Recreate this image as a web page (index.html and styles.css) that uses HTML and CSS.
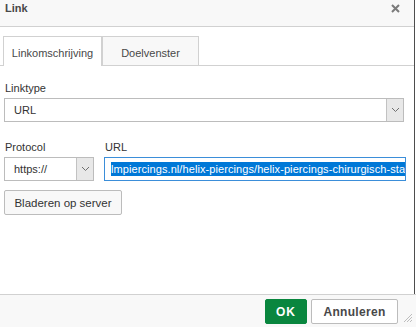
FILE: index.html
```html
<!DOCTYPE html>
<html>
<head>
<meta charset="utf-8">
<link rel="stylesheet" href="styles.css">
</head>
<body>
<div class="dialog">
  <div class="main">
    <div class="title">
      <span class="title-text">Link</span>
      <svg class="close" width="9" height="9" viewBox="0 0 9 9"><path d="M1 1 L8 8 M8 1 L1 8" stroke="#7b7b7b" stroke-width="2" fill="none"/></svg>
    </div>
    <div class="body">
      <div class="tabs">
        <div class="tab tab-active">Linkomschrijving</div>
        <div class="tab tab-second">Doelvenster</div>
      </div>
      <div class="content">
        <div class="label">Linktype</div>
        <div class="select select-wide">
          <span class="select-value">URL</span>
          <span class="drop"><svg width="9" height="6" viewBox="0 0 9 6"><path d="M1 1 L4.5 4.5 L8 1" stroke="#707070" stroke-width="1" fill="none"/></svg></span>
        </div>
        <div class="pair">
          <div class="col">
            <div class="label">Protocol</div>
            <div class="select">
              <span class="select-value">https://</span>
              <span class="drop"><svg width="9" height="6" viewBox="0 0 9 6"><path d="M1 1 L4.5 4.5 L8 1" stroke="#707070" stroke-width="1" fill="none"/></svg></span>
            </div>
          </div>
          <div class="col">
            <div class="label">URL</div>
            <div class="input"><span class="sel">lmpiercings.nl/helix-piercings/helix-piercings-chirurgisch-staal</span></div>
          </div>
        </div>
        <div class="browse">Bladeren op server</div>
      </div>
    </div>
  </div>
  <div class="footer">
    <div class="btn btn-ok">OK</div>
    <div class="btn btn-cancel">Annuleren</div>
    <svg class="grip" width="9" height="9" viewBox="0 0 9 9"><path d="M9 1 L1 9 M9 4 L4 9 M9 7 L7 9" stroke="#bdbdbd" stroke-width="1" fill="none"/></svg>
  </div>
</div>
</body>
</html>
```

FILE: styles.css
```css
html, body {
  margin: 0;
  padding: 0;
  background: #fff;
}
body {
  font-family: "Liberation Sans", Arial, sans-serif;
  font-size: 11px;
  color: #333;
}
.dialog {
  width: 416px;
  height: 327px;
  display: flex;
  flex-direction: column;
  overflow: hidden;
}
.main {
  width: 414px;
  height: 294px;
  border-right: 1px solid #4d4d4d;
  display: flex;
  flex-direction: column;
  flex: none;
}
.title {
  height: 26px;
  background: #f8f8f8;
  border-bottom: 1px solid #d1d1d1;
  display: flex;
  justify-content: space-between;
  align-items: flex-start;
  padding: 0 14px 0 5px;
  flex: none;
}
.title-text {
  font-weight: bold;
  color: #484848;
  line-height: 17px;
}
.close {
  margin-top: 4px;
}
.body {
  flex: 1;
  background: #fff;
  padding-top: 9px;
}
.tabs {
  display: flex;
  padding-left: 3px;
  border-bottom: 1px solid #d1d1d1;
  height: 29px;
}
.tab {
  box-sizing: border-box;
  height: 29px;
  border: 1px solid #d1d1d1;
  border-bottom: none;
  display: flex;
  align-items: center;
  justify-content: center;
  padding-top: 3px;
  color: #484848;
}
.tab-active {
  width: 99px;
  background: #fff;
  height: 30px;
  margin-bottom: -1px;
  padding-top: 2px;
}
.tab-second {
  width: 97px;
  background: #f8f8f8;
}
.content {
  padding: 16px 10px 0 4px;
}
.label {
  line-height: 13px;
  padding-left: 1px;
  margin-bottom: 3px;
  color: #333;
}
.select {
  box-sizing: border-box;
  height: 24px;
  border: 1px solid #bcbcbc;
  background: #fff;
  display: flex;
  align-items: center;
  justify-content: space-between;
}
.select-value {
  padding-left: 9px;
}
.drop {
  box-sizing: border-box;
  width: 17px;
  height: 22px;
  background: #e8e8e8;
  border-left: 1px solid #c2c2c2;
  display: flex;
  align-items: center;
  justify-content: center;
}
.select-wide {
  margin-bottom: 19px;
}
.pair {
  display: grid;
  grid-template-columns: 90px minmax(0, 1fr);
  column-gap: 10px;
}
.col {
  min-width: 0;
}
.input {
  box-sizing: border-box;
  height: 24px;
  border: 1px solid #3b8ed9;
  padding: 0 3px 0 6px;
  display: flex;
  align-items: center;
  overflow: hidden;
  white-space: nowrap;
  margin-right: -2px;
}
.sel {
  background: #0078d7;
  color: #fff;
  line-height: 14px;
  letter-spacing: 0.08px;
  flex: none;
}
.browse {
  box-sizing: border-box;
  margin-top: 9px;
  width: 118px;
  height: 25px;
  border: 1px solid #bcbcbc;
  border-radius: 2px;
  background: #f8f8f8;
  display: flex;
  align-items: center;
  justify-content: center;
  font-size: 11.5px;
  color: #333;
}
.footer {
  flex: 1;
  background: #f8f8f8;
  border-top: 1px solid #d1d1d1;
  display: flex;
  justify-content: flex-end;
  align-items: flex-start;
  padding: 4px 18px 0 0;
  gap: 4px;
  position: relative;
}
.btn {
  box-sizing: border-box;
  height: 25px;
  display: flex;
  align-items: center;
  justify-content: center;
  font-weight: bold;
  font-size: 12px;
  border-radius: 2px;
}
.btn-ok {
  width: 42px;
  background: #09863e;
  border: 1px solid #09863e;
  color: #fff;
  letter-spacing: 1px;
}
.btn-cancel {
  width: 87px;
  background: #fff;
  border: 1px solid #bcbcbc;
  color: #484848;
  letter-spacing: 0.3px;
}
.grip {
  position: absolute;
  right: 4px;
  bottom: 5px;
}
```
